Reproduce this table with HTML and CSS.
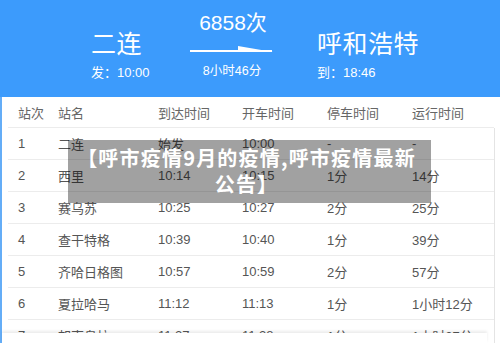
FILE: index.html
```html
<!DOCTYPE html>
<html lang="zh">
<head>
<meta charset="utf-8">
<link rel="stylesheet" href="styles.css">
</head>
<body>
<div class="page">
  <header class="hero">
    <div class="station">
      <div class="st-name">二连</div>
      <div class="st-time">发：10:00</div>
    </div>
    <div class="mid">
      <div class="train">6858次</div>
      <svg class="arrow" width="84" height="10" viewBox="0 0 84 10">
        <rect x="0" y="6" width="82" height="2" fill="#fff"/>
        <polygon points="48,2 83,8 48,8" fill="#fff"/>
      </svg>
      <div class="dur">8小时46分</div>
    </div>
    <div class="station right">
      <div class="st-name">呼和浩特</div>
      <div class="st-time">到：18:46</div>
    </div>
  </header>
  <main class="body">
    <div class="table">
      <div class="row head">
        <span>站次</span><span>站名</span><span>到达时间</span><span>开车时间</span><span>停车时间</span><span>运行时间</span>
      </div>
      <div class="row"><span>1</span><span>二连</span><span>始发</span><span>10:00</span><span>-</span><span>-</span></div>
      <div class="row"><span>2</span><span>西里</span><span>10:14</span><span>10:15</span><span>1分</span><span>14分</span></div>
      <div class="row"><span>3</span><span>赛乌苏</span><span>10:25</span><span>10:27</span><span>2分</span><span>25分</span></div>
      <div class="row"><span>4</span><span>查干特格</span><span>10:39</span><span>10:40</span><span>1分</span><span>39分</span></div>
      <div class="row"><span>5</span><span>齐哈日格图</span><span>10:57</span><span>10:59</span><span>2分</span><span>57分</span></div>
      <div class="row"><span>6</span><span>夏拉哈马</span><span>11:12</span><span>11:13</span><span>1分</span><span>1小时12分</span></div>
      <div class="row"><span>7</span><span>朝克乌拉</span><span>11:27</span><span>11:28</span><span>1分</span><span>1小时27分</span></div>
    </div>
    <div class="scroll-edge"></div>
    <div class="fade"></div>
    <div class="caption">【呼市疫情9月的疫情,呼市疫情最新<br>公告】</div>
  </main>
</div>
</body>
</html>
```
FILE: styles.css
```css
* { box-sizing: border-box; }
html, body { margin: 0; padding: 0; }
body {
  width: 500px;
  height: 343px;
  overflow: hidden;
  background: #fff;
  font-family: "Liberation Sans", "Noto Sans CJK SC", sans-serif;
}
.page { width: 500px; height: 343px; overflow: hidden; }
.hero {
  height: 97px;
  background: #3c9bfc;
  color: #fff;
  display: flex;
  padding-left: 91px;
}
.station { width: 99px; padding-top: 28px; }
.station.right { margin-left: 43px; }
.st-name { font-size: 25px; line-height: 32px; letter-spacing: 0.5px; white-space: nowrap; }
.st-time { font-size: 13px; line-height: 16px; margin-top: 5px; white-space: nowrap; }
.mid {
  width: 84px;
  padding-top: 10px;
  display: flex;
  flex-direction: column;
  align-items: center;
}
.train { font-size: 21px; line-height: 26px; margin-left: 2px; }
.arrow { display: block; margin-top: 8px; }
.dur { font-size: 12.5px; line-height: 16px; margin-top: 9px; }
.body {
  position: relative;
  height: 246px;
  border-left: 2px solid #64adf7;
}
.table { padding-left: 6px; width: 492px; }
.row {
  display: grid;
  grid-template-columns: 40px 100px 84px 85px 85px 1fr;
  height: 32px;
  align-items: center;
  border-bottom: 1px solid #ececec;
  color: #555;
  font-size: 13px;
}
.row span { padding-left: 10px; white-space: nowrap; }
.row.head { height: 31px; color: #666; }
.scroll-edge {
  position: absolute;
  left: 492px;
  top: 31px;
  bottom: 0;
  width: 1px;
  background: #e4e4e4;
}
.fade {
  position: absolute;
  left: 0;
  right: 13px;
  bottom: 0;
  height: 10px;
  background: #fff;
  box-shadow: 0 -2px 3px rgba(0,0,0,0.08);
}
.caption {
  position: absolute;
  left: 66px;
  top: 43px;
  width: 363px;
  height: 63px;
  background: rgba(0,0,0,0.37);
  color: #fff;
  font-weight: bold;
  font-size: 20px;
  line-height: 26px;
  letter-spacing: 1.2px;
  text-align: center;
  padding: 5px 6px 0 0;
  white-space: nowrap;
  font-family: "Noto Sans CJK SC", sans-serif;
}
```
